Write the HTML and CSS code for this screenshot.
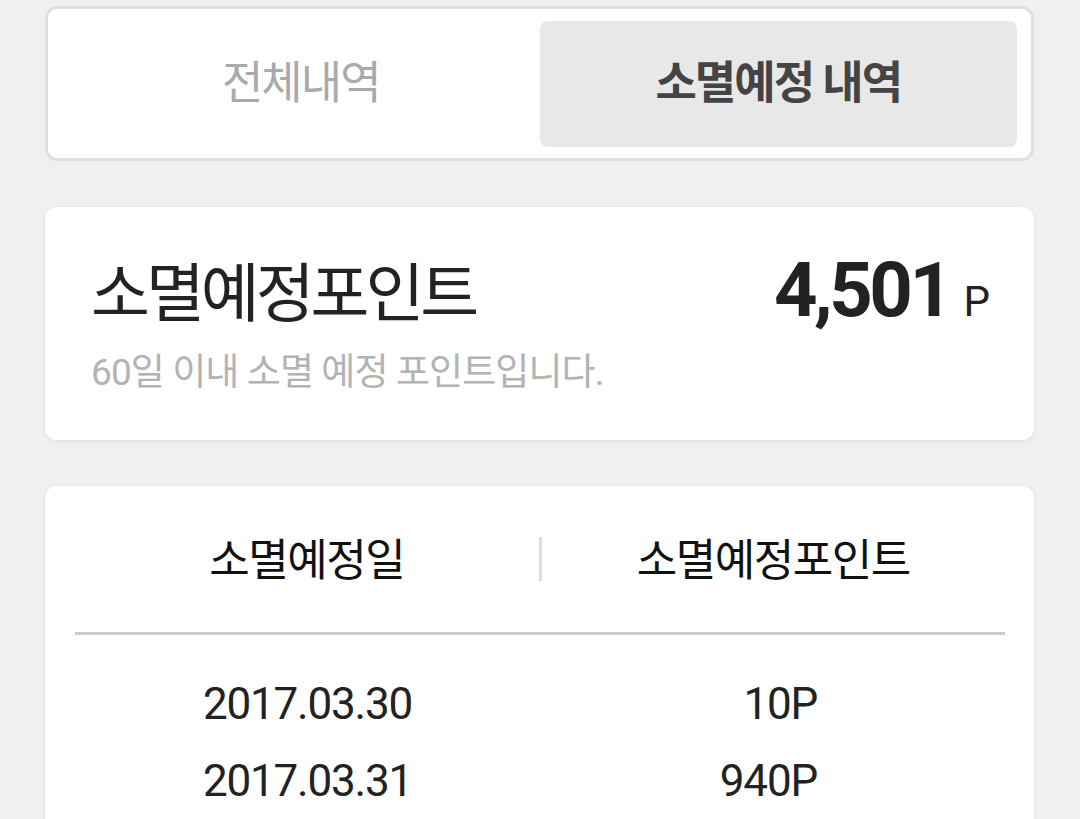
FILE: index.html
```html
<!DOCTYPE html>
<html lang="ko">
<head>
<meta charset="utf-8">
<link rel="stylesheet" href="styles.css">
</head>
<body>
<div class="page">
  <div class="tabs">
    <div class="tab">전체내역</div>
    <div class="tab active">소멸예정 내역</div>
  </div>

  <div class="card summary">
    <div class="summary-row">
      <div class="summary-title">소멸예정포인트</div>
      <div class="summary-value"><span class="num">4,501</span><span class="unit">P</span></div>
    </div>
    <div class="summary-desc">60일 이내 소멸 예정 포인트입니다.</div>
  </div>

  <div class="card list">
    <div class="list-head">
      <div class="head-cell">소멸예정일</div>
      <div class="head-divider"></div>
      <div class="head-cell">소멸예정포인트</div>
    </div>
    <div class="list-body">
      <div class="list-row">
        <div class="cell date">2017.03.30</div>
        <div class="cell pts">10P</div>
      </div>
      <div class="list-row">
        <div class="cell date">2017.03.31</div>
        <div class="cell pts">940P</div>
      </div>
    </div>
  </div>
</div>
</body>
</html>
```

FILE: styles.css
```css
html, body {
  margin: 0;
  padding: 0;
  background: #f0f0f0;
  font-family: Roboto, "Noto Sans CJK KR", sans-serif;
  color: #222;
}
.page {
  padding: 6px 46px 0 45px;
  display: flex;
  flex-direction: column;
  gap: 46px;
}
.tabs {
  background: #fff;
  border: 3px solid #e0e0e0;
  border-radius: 12px;
  padding: 12px 14px 11px;
  display: grid;
  grid-template-columns: 1fr 1fr;
}
.tab {
  height: 126px;
  display: flex;
  align-items: center;
  justify-content: center;
  padding-bottom: 10px;
  box-sizing: border-box;
  font-size: 45px;
  letter-spacing: -2px;
  color: #aaa;
  border-radius: 8px;
}
.tab.active {
  background: #e8e8e8;
  color: #444;
  font-weight: 700;
}
.card {
  background: #fff;
  border-radius: 12px;
  box-shadow: 0 1px 4px rgba(0,0,0,0.08);
}
.summary {
  height: 233px;
  box-sizing: border-box;
  padding: 38px 44px 0 46px;
}
.summary-row {
  display: flex;
  justify-content: space-between;
  align-items: baseline;
}
.summary-title {
  font-size: 64px;
  line-height: 84px;
  letter-spacing: -4px;
  color: #222;
}
.summary-value .num {
  font-size: 76px;
  font-weight: 700;
  letter-spacing: -3.5px;
  color: #222;
}
.summary-value .unit {
  font-size: 42px;
  margin-left: 14px;
  color: #222;
}
.summary-desc {
  font-size: 37px;
  letter-spacing: -0.9px;
  color: #b3b3b3;
  margin-top: 5px;
}
.list {
  padding: 0 29px 0 30px;
  height: 400px;
}
.list-head {
  display: grid;
  grid-template-columns: 1fr 3px 1fr;
  align-items: center;
  height: 146px;
  border-bottom: 3px solid #cccccc;
}
.head-cell {
  text-align: center;
  font-size: 44px;
  letter-spacing: -1.5px;
  color: #111;
  padding-bottom: 4px;
}
.head-divider {
  width: 3px;
  height: 44px;
  background: #dddddd;
}
.list-body {
  padding-top: 30px;
}
.list-row {
  display: grid;
  grid-template-columns: 1fr 1fr;
  height: 77px;
  align-items: center;
}
.cell {
  font-size: 44px;
  letter-spacing: -1.2px;
  color: #222;
}
.cell.date {
  text-align: center;
}
.cell.pts {
  text-align: right;
  padding-right: 188px;
}
```
